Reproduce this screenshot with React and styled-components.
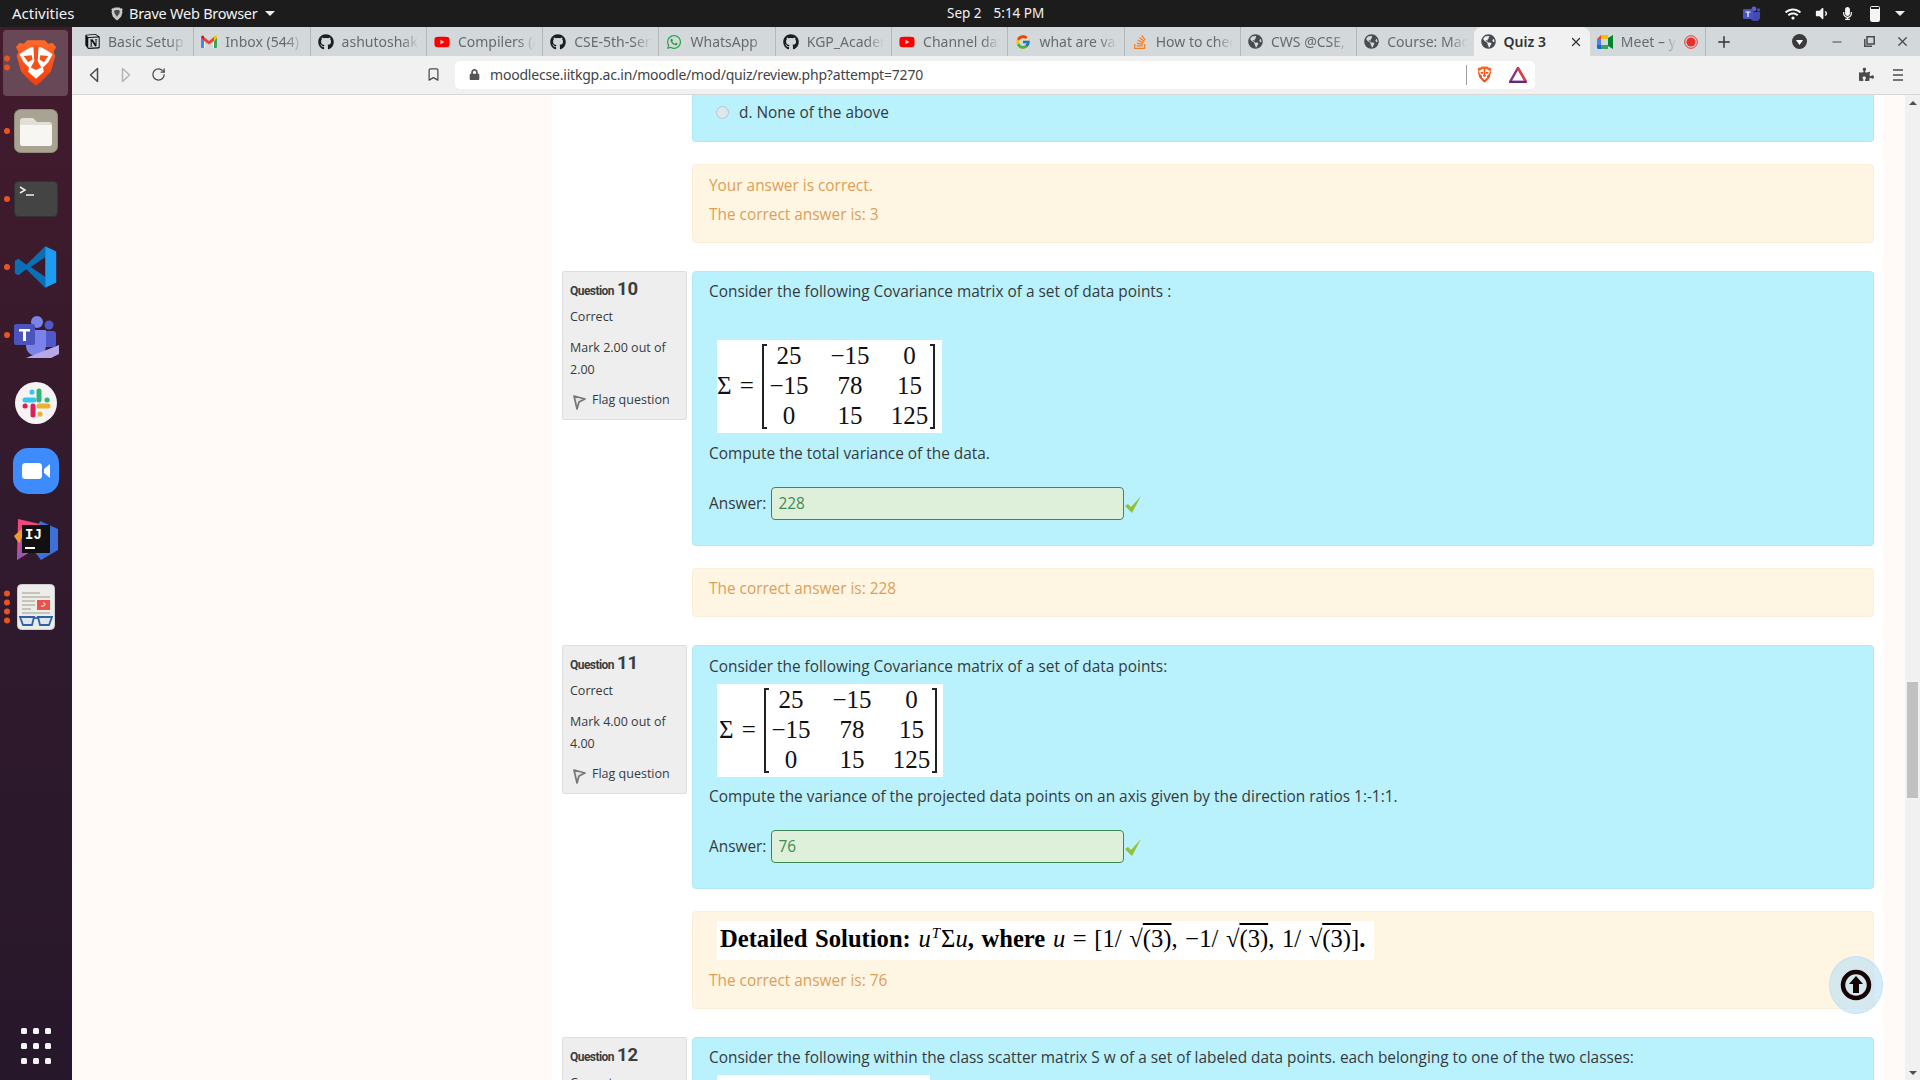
import React from "react";
import styled, { createGlobalStyle } from "styled-components";
import { FaGithub, FaWhatsapp, FaStackOverflow, FaGlobeAmericas, FaLock, FaPuzzlePiece, FaWifi, FaVolumeDown, FaMicrophone, FaYoutube } from "react-icons/fa";
import { FcGoogle } from "react-icons/fc";
import { SiNotion } from "react-icons/si";
import { RotateCw, Bookmark, Plus, X, Minus } from "lucide-react";

const Global = createGlobalStyle`
  html, body { margin: 0; padding: 0; height: 100%; overflow: hidden; background: #fff; }
  * { box-sizing: border-box; }
`;

const UI = `"Noto Sans", "Open Sans", sans-serif`;
const BODY = `"Open Sans", "Noto Sans", sans-serif`;
const SERIF = `"Liberation Serif", serif`;

const Root = styled.div`
  width: 1920px; height: 1080px; display: flex; flex-direction: column; overflow: hidden;
  font-family: ${BODY}; color: #373a3c;
`;
const TopBar = styled.header`
  height: 27px; flex: none; background: #1c1c1c; color: #f2f2f2; display: flex; align-items: center;
  font: 14.5px/27px ${UI}; padding-left: 12px; padding-right: 15px;
`;
const Activities = styled.span` width: 99px; font-size: 15px; `;
const AppMenu = styled.div`
  display: flex; align-items: center; gap: 6px; width: 836px; letter-spacing: -0.25px;
`;
const Caret = styled.span`
  width: 0; height: 0; border-left: 5px solid transparent; border-right: 5px solid transparent;
  border-top: 5px solid #eee; margin-left: ${p => p.$ml || 0}px;
`;
const Clock = styled.time` display: flex; gap: 12px; font-size: 13.5px; `;
const Tray = styled.div` margin-left: auto; display: flex; align-items: center; gap: 12.5px; color: #f4f4f4; `;
const TrayLead = styled.span` display: flex; margin-right: 12px; `;
const Battery = styled.span`
  width: 10px; height: 16px; border: 1.5px solid #f4f4f4; border-radius: 1.5px; margin: 0 3px;
  background: linear-gradient(#1c1c1c 15%, #f4f4f4 15%);
`;
const Body = styled.div` flex: 1; display: flex; min-height: 0; `;
const Dock = styled.nav`
  width: 72px; flex: none; display: flex; flex-direction: column; align-items: center; padding-top: 2px; padding-bottom: 16px;
  background: linear-gradient(180deg, #441b2c 0%, #321a2d 45%, #27172a 100%);
`;
const DockItem = styled.div`
  position: relative; width: 66px; height: 68px; flex: none; display: flex; align-items: center; justify-content: center;
`;
const ActiveBox = styled(DockItem)`
  &::before { content: ""; position: absolute; left: 0; right: 1px; top: 1px; bottom: 1px; background: rgba(255,255,255,.2); border-radius: 4px; }
  & > svg { position: relative; }
`;
const Dots = styled.div`
  position: absolute; left: 1px; top: 50%; transform: translateY(-50%); display: flex; flex-direction: column; gap: 3px;
  & > i { width: 6px; height: 6px; border-radius: 50%; background: #e95420; display: block; }
`;
const AppsGrid = styled.div`
  margin-top: auto; display: grid; grid-template-columns: repeat(3, 6px); gap: 9px 6px; width: 30px;
  & > i { width: 6px; height: 6px; border-radius: 1.5px; background: #f4f4f4; display: block; }
`;
const Browser = styled.div` flex: 1; display: flex; flex-direction: column; min-width: 0; position: relative; `;
const TabStrip = styled.div`
  height: 29px; flex: none; background: #d3d8db; display: flex; align-items: stretch; padding-left: 6px;
`;
const Tab = styled.div`
  width: 116.3px; flex: none; display: flex; align-items: center; gap: 8px; padding: 0 7px;
  font: ${p => (p.$active ? 600 : 400)} 14px/29px ${UI}; color: ${p => (p.$active ? "#2f3336" : "#676b6f")};
  border-right: ${p => (p.$active || p.$noSep ? "none" : "1px solid #b3b8bb")};
  background: ${p => (p.$active ? "#f1f1f1" : "transparent")};
  border-radius: ${p => (p.$active ? "8px 8px 0 0" : 0)};
  & > svg { flex: none; }
`;
const TabLabel = styled.span`
  flex: 1; min-width: 0; overflow: hidden; white-space: nowrap;
  mask-image: ${p => (p.$fade ? "linear-gradient(to right, #000 78%, transparent)" : "none")};
`;
const NewTab = styled.div` width: 36px; display: flex; align-items: center; justify-content: center; color: #333; `;
const WindowControls = styled.div`
  margin-left: auto; display: flex; align-items: center; gap: 20px; padding-right: 10px; color: #4a4a4a;
  & > svg:first-child { margin-right: 3px; }
`;
const Toolbar = styled.div`
  height: 39px; flex: none; background: #f1f1f1; border-bottom: 1px solid #d6d6d6; display: flex; align-items: center; padding: 0 6px 1px 6px;
`;
const NavGroup = styled.div` display: flex; margin-right: 243px; `;
const IconButton = styled.div`
  width: 32px; height: 28px; display: flex; align-items: center; justify-content: center; color: #4b4b4b; flex: none;
`;
const Spacer = styled.div` flex: 1; `;
const Omnibox = styled.div`
  width: 1080px; height: 28px; background: #fff; border-radius: 5px; margin-left: 6px; display: flex; align-items: center;
  padding-left: 14px; font: 14px/28px ${UI}; color: #3f4448; letter-spacing: -0.2px;
`;
const Url = styled.span` margin-left: 10px; `;
const OmniDivider = styled.span` margin-left: auto; width: 1px; height: 20px; background: #9d9d9d; `;
const OmniIcons = styled.div` display: flex; align-items: center; gap: 17px; margin: 0 8px 0 10px; `;

const Page = styled.main`
  flex: 1; min-height: 0; display: flex; overflow: hidden; position: relative; background: #fff9f8;
`;
const LeftGutter = styled.div` width: 480px; flex: none; `;
const Column = styled.div`
  width: 1331px; flex: none; background: #fff; padding: 0 9px 0 10px; display: flex; flex-direction: column; gap: 28px;
`;
const RightGutter = styled.div` width: 22px; flex: none; `;
const Scrollbar = styled.div`
  width: 15px; flex: none; background: #f1f1f1; display: flex; flex-direction: column; align-items: center; padding-top: 6px;
`;
const ScrollArrow = styled.span`
  width: 0; height: 0; border-left: 4px solid transparent; border-right: 4px solid transparent;
  ${p => (p.$down ? "border-top: 4px solid #505050; margin-top: auto; margin-bottom: 5px;" : "border-bottom: 4px solid #505050;")}
`;
const ScrollThumb = styled.span` width: 11px; height: 116px; background: #c1c1c1; margin-top: 577px; `;
const Question = styled.section` display: grid; grid-template-columns: 125px 1182px; column-gap: 5px; align-items: start; `;
const Info = styled.aside`
  background: #eee; border: 1px solid #dedede; border-radius: 2px; height: ${p => p.$h || 149}px; padding: 2px 7px; font-size: 12.5px; line-height: 22px; overflow: hidden;
`;
const QNo = styled.h3`
  margin: 0; font: 700 12px/30px Roboto, sans-serif; color: #3b3e40; letter-spacing: -0.55px;
  & > b { font-size: 18.5px; margin-left: 3px; font-weight: 700; letter-spacing: 0; }
`;
const State = styled.div` margin: 0 0 9px; `;
const Mark = styled.div` margin-bottom: 8px; `;
const Flag = styled.div` display: flex; align-items: flex-start; gap: 6px; padding-left: 3px; & > svg { margin-top: 6px; } `;
const Main = styled.div` display: flex; flex-direction: column; gap: ${p => p.$gap}px; `;
const Formulation = styled.div`
  background: #b9f2fc; border: 1px solid #b0e9f4; border-radius: 4px; padding: ${p => p.$pt ?? 5}px 16px 0; height: ${p => p.$h}px; overflow: hidden;
  font-size: 15.4px; line-height: 29px;
  ${p => p.$cut && "border-top: none; border-top-left-radius: 0; border-top-right-radius: 0;"}
`;
const Para = styled.p` margin: ${p => p.$mt || 0}px 0 0; `;
const OptionRow = styled.label` display: flex; align-items: center; gap: 10px; padding-left: 7px; `;
const Radio = styled.span`
  width: 13px; height: 13px; border-radius: 50%; background: #dfe6ec; border: 1px solid #b9c6d0; flex: none;
`;
const Feedback = styled.div`
  background: #fef5e2; border: 1px solid #fcefd9; border-radius: 4px; padding: ${p => p.$pt ?? 5}px 13px 0 16px; height: ${p => p.$h}px;
  color: #dd9f58; font-size: 15.4px; line-height: 29px; overflow: hidden;
`;
const MatrixBox = styled.div`
  margin: ${p => p.$mt}px 0 0 8px; width: ${p => p.$w || 225}px; height: ${p => p.$boxH || 93}px; background: #fff; display: flex; align-items: center;
  font: 25px/30px ${SERIF}; color: #111; overflow: hidden; flex: none; padding: 0 0 1px ${p => p.$shift || 0}px;
`;
const Sigma = styled.span` width: 45px; flex: none; white-space: nowrap; word-spacing: 2px; `;
const Bracket = styled.span`
  width: 5px; height: 85px; flex: none; border: 2px solid #222; ${p => (p.$right ? "border-left: none;" : "border-right: none;")}
`;
const MatrixGrid = styled.div` display: grid; grid-template-columns: 44px 78px 41px; text-align: center; flex: none; `;
const AnswerRow = styled.div` margin-top: ${p => p.$mt}px; display: flex; align-items: center; gap: 5px; `;
const AnswerField = styled.output`
  width: 353px; height: 33px; background: #deefda; border: 1px solid #3c8a53; border-radius: 4px; padding: 0 6px; color: #3f8b52; line-height: 31px; margin-right: -4px;
`;
const CheckMark = styled.span` display: flex; margin-top: 3px; `;
const SolutionBox = styled.div`
  margin: 0 0 0 8px; width: 657px; height: 39px; background: #fff; color: #000; font: 24.6px/36px ${SERIF}; word-spacing: 1.5px; white-space: nowrap; padding-left: 3px; overflow: hidden;
  & sup { font-size: 15px; line-height: 0; margin: 0 1px; }
`;
const Root3 = styled.span` text-decoration: overline; `;
const ToTop = styled.button`
  position: absolute; left: 1757px; top: 861px; width: 54px; height: 58px; border-radius: 50%; border: 1px solid #c6e3f4; background: rgba(186,224,245,.62);
  display: flex; align-items: center; justify-content: center; padding: 0;
`;

const Brave = ({ s = 44, h }) => (
  <svg width={s} height={h || s * 1.16} viewBox="0 0 48 56">
    <defs><linearGradient id="bg" x1="0" y1="0" x2="0" y2="1"><stop offset="0" stopColor="#ff6a2a" /><stop offset="1" stopColor="#f23d0c" /></linearGradient></defs>
    <path d="M14 2H34L38 6 43 5 47 10 44 15 46 20 41 38 30 49 24 54 18 49 7 38 2 20 4 15 1 10 5 5 10 6Z" fill="url(#bg)" />
    <path d="M11 14L18 10H30L37 14 43 18 38 27 32 33 33 38 24 46 15 38 16 33 10 27 5 18Z" fill="#fff" />
    <path d="M10 20L19 19 20 24 15 27ZM38 20L29 19 28 24 33 27ZM21 8H27L26 26 30 33 24 36 18 33 22 26Z" fill="#f4511e" />
  </svg>
);
const Files = () => (
  <svg width="44" height="44" viewBox="0 0 44 44">
    <rect x=".5" y=".5" width="43" height="43" rx="6" fill="#a8a392" stroke="#8f8a7a" />
    <path d="M6 12a3 3 0 0 1 3-3h10l4 4h12a3 3 0 0 1 3 3v18a3 3 0 0 1-3 3H9a3 3 0 0 1-3-3Z" fill="#e3dfd5" />
    <path d="M6 16h32v18a3 3 0 0 1-3 3H9a3 3 0 0 1-3-3Z" fill="#f7f6f3" />
  </svg>
);
const Terminal = () => (
  <svg width="44" height="36" viewBox="0 0 44 36">
    <rect x=".5" y=".5" width="43" height="35" rx="4" fill="#444" stroke="#333" />
    <path d="M6 6l5 3-5 3M12 14h8" fill="none" stroke="#eee" strokeWidth="1.5" />
  </svg>
);
const VSCode = () => (
  <svg width="44" height="44" viewBox="0 0 100 100">
    <path d="M71 3L28 45 10 31 2 36V64L10 69 28 55 71 97V72L38 50 71 28Z" fill="#0a6fb5" />
    <path d="M71 3L96 15V85L71 97Z" fill="#1f9cf0" />
  </svg>
);
const Teams = () => (
  <svg width="46" height="46" viewBox="0 -3 46 46">
    <circle cx="24" cy="7" r="6" fill="#7b83eb" />
    <circle cx="36" cy="10" r="4.5" fill="#5059c9" />
    <rect x="29" y="16" width="14" height="16" rx="3" fill="#5059c9" />
    <path d="M13 15H33V31a9 9 0 0 1-20 0Z" fill="#7b83eb" />
    <rect x="1" y="9" width="21" height="21" rx="2" fill="#4b53bc" />
    <path d="M6 14H17V16.5H13V26H10V16.5H6Z" fill="#fff" />
    <path d="M13 43L46 30V39L38 43Z" fill="#b7a9e8" />
  </svg>
);
const Slack = () => (
  <svg width="42" height="42" viewBox="0 0 42 42">
    <circle cx="21" cy="21" r="21" fill="#f5f3f3" />
    <g strokeWidth="5" strokeLinecap="round" fill="none">
      <path d="M10 18H19M17 10V10.2" stroke="#36c5f0" />
      <path d="M24 9V18M32 18H32.2" stroke="#2eb67d" />
      <path d="M24 24H33M25 32V32.2" stroke="#ecb22e" />
      <path d="M18 24V33M10 24H10.2" stroke="#e01e5a" />
    </g>
  </svg>
);
const Zoom = () => (
  <svg width="46" height="46" viewBox="0 0 46 46">
    <rect width="46" height="46" rx="15" fill="#3d8bfd" />
    <rect x="9" y="15" width="20" height="16" rx="3.5" fill="#fff" />
    <path d="M31 21L37 16V30L31 25Z" fill="#fff" />
  </svg>
);
const IntelliJ = () => (
  <svg width="46" height="46" viewBox="0 0 46 46">
    <path d="M27 5L45 13V34L28 44 17 30Z" fill="#3f6fd8" />
    <path d="M5 3L27 8 17 36 4 44Z" fill="#f0487c" />
    <path d="M1 20L12 10 16 30 5 26Z" fill="#f09a32" />
    <path d="M4 44L8 22 20 32Z" fill="#8c5bb5" />
    <rect x="9" y="9" width="28" height="28" fill="#111" />
    <text x="12" y="23" fill="#fff" fontFamily="Liberation Mono, monospace" fontWeight="700" fontSize="14">IJ</text>
    <rect x="12" y="31" width="10" height="2" fill="#fff" />
  </svg>
);
const Reader = () => (
  <svg width="38" height="46" viewBox="0 0 38 46">
    <rect x=".5" y=".5" width="37" height="45" rx="4" fill="#ececea" stroke="#cfcfcf" />
    <g stroke="#b9b5a6" strokeWidth="1.6"><path d="M5 9H23M5 13H33M5 17H18M5 21H18M5 25H14M5 29H33" /></g>
    <rect x="20" y="16" width="13" height="10" fill="#e9534b" />
    <path d="M24 22c4 1 6-3 2-3" stroke="#fff" fill="none" />
    <g fill="#dfe6ee" stroke="#2c62a8" strokeWidth="1.8"><path d="M3 33H17L15 41H6Z" /><path d="M21 33H35L32 41H23Z" /><path d="M17 34H21" /></g>
  </svg>
);

const GlobeIcon = () => <FaGlobeAmericas size={15} color="#484c50" />;
const Gmail = () => (
  <svg width="16" height="13" viewBox="0 0 16 13">
    <path d="M1 13V2L8 7 15 2V13H12V6L8 9 4 6V13Z" fill="#fff" />
    <path d="M0 2.5V12a1 1 0 0 0 1 1H3V6Z" fill="#4285f4" />
    <path d="M16 2.5V12a1 1 0 0 1-1 1H13V6Z" fill="#34a853" />
    <path d="M3 2L8 6 13 2V6L8 9.5 3 6Z" fill="#ea4335" />
    <path d="M0 2.5C0 .6 2 -.3 3 1V6Z" fill="#c5221f" />
    <path d="M16 2.5C16 .6 14 -.3 13 1V6Z" fill="#fbbc04" />
  </svg>
);
const Meet = () => (
  <svg width="16" height="14" viewBox="0 0 16 14">
    <path d="M4 0H11V4H4Z" fill="#fbbc04" />
    <path d="M0 4L4 0V4Z" fill="#ea4335" />
    <path d="M0 4H4V10H0Z" fill="#4285f4" />
    <path d="M0 10H4V14H1.5A1.5 1.5 0 0 1 0 12.5Z" fill="#1967d2" />
    <path d="M4 10H11V14H4Z" fill="#34a853" />
    <path d="M11 3L16 0V14L11 11Z" fill="#00832d" />
  </svg>
);
const Rec = () => (
  <svg width="14" height="14" viewBox="0 0 14 14"><circle cx="7" cy="7" r="6.3" fill="none" stroke="#e8302a" /><circle cx="7" cy="7" r="4.6" fill="#e8302a" /></svg>
);
const BraveSmall = () => <Brave s={15} h={17} />;
const Bat = () => (
  <svg width="18" height="16" viewBox="0 0 18 16">
    <path d="M9 1L17 15H1Z" fill="none" stroke="#8b2f87" strokeWidth="2.4" />
    <path d="M9 1L17 15" stroke="#e0443a" strokeWidth="2.4" />
    <path d="M1 15H17" stroke="#5b2a86" strokeWidth="2.4" />
  </svg>
);
const Back = () => (
  <svg width="10" height="16" viewBox="0 0 10 16"><path d="M8.5 1.5V14.5L1.5 8Z" fill="none" stroke="#4b4b4b" strokeWidth="1.5" strokeLinejoin="round" /></svg>
);
const Forward = () => (
  <svg width="10" height="16" viewBox="0 0 10 16"><path d="M1.5 1.5V14.5L8.5 8Z" fill="none" stroke="#b5b5b5" strokeWidth="1.5" strokeLinejoin="round" /></svg>
);
const BraveTray = () => (
  <svg width="12" height="14" viewBox="0 0 48 56"><path d="M14 2H34L38 6 43 5 47 10 44 15 46 20 41 38 30 49 24 54 18 49 7 38 2 20 4 15 1 10 5 5 10 6Z" fill="#c9c9c9" /><path d="M12 16L18 12H30L36 16 33 27 28 33 24 40 20 33 15 27Z" fill="#4a4a4a" /></svg>
);
const TeamsTray = () => (
  <svg width="18" height="16" viewBox="0 0 18 16">
    <circle cx="11" cy="3" r="2.4" fill="#5b63c9" /><circle cx="15.5" cy="4" r="1.8" fill="#444bb0" />
    <path d="M8 6H17V11a4 4 0 0 1-4 4H11a3 3 0 0 1-3-3Z" fill="#444bb0" />
    <rect y="3" width="10" height="10" rx="1" fill="#4b53bc" />
    <path d="M2.5 5.5H7.5V6.6H5.6V11H4.4V6.6H2.5Z" fill="#fff" />
  </svg>
);
const FlagIcon = () => (
  <svg width="13" height="15" viewBox="0 0 13 15"><path d="M1 1L12 4 6 7 4 14Z" fill="#e4e4e4" stroke="#777" strokeWidth="1.7" strokeLinejoin="round" /></svg>
);
const Check = () => (
  <CheckMark><svg width="17" height="18" viewBox="0 0 17 18"><path d="M0 10L3 8 6 11 16 0 7 17Z" fill="#94c133" /></svg></CheckMark>
);
const UpCircle = () => (
  <svg width="32" height="32" viewBox="0 0 32 32">
    <circle cx="16" cy="16" r="13" fill="none" stroke="#170505" strokeWidth="4.5" />
    <path d="M16 7L23 15H19V24H13V15H9Z" fill="#170505" />
  </svg>
);
const MenuLines = () => (
  <svg width="14" height="14" viewBox="0 0 14 14"><path d="M2 2H12M2 7H12M2 12H12" stroke="#4b4b4b" strokeWidth="1.6" /></svg>
);
const Restore = () => (
  <svg width="11" height="11" viewBox="0 0 11 11"><path d="M3 .8H10.2V8H3ZM.8 3V10.2H8" fill="none" stroke="#4a4a4a" strokeWidth="1.5" /></svg>
);
const DropDisc = () => (
  <svg width="15" height="15" viewBox="0 0 15 15"><circle cx="7.5" cy="7.5" r="7.5" fill="#3b3b3b" /><path d="M4 6H11L7.5 11Z" fill="#fff" /></svg>
);

const TABS = [
  { icon: <SiNotion size={15} color="#111" />, label: "Basic Setup" },
  { icon: <Gmail />, label: "Inbox (544)" },
  { icon: <FaGithub size={16} color="#1b1f23" />, label: "ashutoshak" },
  { icon: <FaYoutube size={16} color="#f00" />, label: "Compilers (A" },
  { icon: <FaGithub size={16} color="#1b1f23" />, label: "CSE-5th-Sem" },
  { icon: <FaWhatsapp size={16} color="#25a244" />, label: "WhatsApp" },
  { icon: <FaGithub size={16} color="#1b1f23" />, label: "KGP_Academ" },
  { icon: <FaYoutube size={16} color="#f00" />, label: "Channel dash" },
  { icon: <FcGoogle size={16} />, label: "what are vari" },
  { icon: <FaStackOverflow size={16} color="#f48024" />, label: "How to chec" },
  { icon: <GlobeIcon />, label: "CWS @CSE," },
  { icon: <GlobeIcon />, label: "Course: Mac" },
];

const DOCK = [
  { icon: <Files />, dots: 1 },
  { icon: <Terminal />, dots: 1 },
  { icon: <VSCode />, dots: 1 },
  { icon: <Teams />, dots: 1 },
  { icon: <Slack />, dots: 0 },
  { icon: <Zoom />, dots: 0 },
  { icon: <IntelliJ />, dots: 0 },
  { icon: <Reader />, dots: 4 },
];

const DotList = ({ n }) => (
  <Dots>{Array.from({ length: n }, (_, i) => <i key={i} />)}</Dots>
);

const Matrix = ({ mt, w, clip, shift }) => (
  <MatrixBox $mt={mt} $w={w} $shift={shift}>
    {!clip && (
      <>
        <Sigma>Σ =</Sigma>
        <Bracket />
        <MatrixGrid>
          <span>25</span><span>−15</span><span>0</span>
          <span>−15</span><span>78</span><span>15</span>
          <span>0</span><span>15</span><span>125</span>
        </MatrixGrid>
        <Bracket $right />
      </>
    )}
  </MatrixBox>
);

const QuestionInfo = ({ no, mark }) => (
  <Info>
    <QNo>Question<b>{no}</b></QNo>
    <State>Correct</State>
    <Mark>Mark {mark} out of<br />{mark}</Mark>
    <Flag><FlagIcon /><span>Flag question</span></Flag>
  </Info>
);

export default function App() {
  return (
    <Root>
      <Global />
      <TopBar>
        <Activities>Activities</Activities>
        <AppMenu><BraveTray />Brave Web Browser<Caret $ml={1} /></AppMenu>
        <Clock><span>Sep 2</span><span>5:14 PM</span></Clock>
        <Tray>
          <TrayLead><TeamsTray /></TrayLead>
          <FaWifi size={16} />
          <FaVolumeDown size={15} />
          <FaMicrophone size={13} />
          <Battery />
          <Caret />
        </Tray>
      </TopBar>
      <Body>
        <Dock>
          <ActiveBox>
            <DotList n={2} />
            <Brave s={42} h={50} />
          </ActiveBox>
          {DOCK.map((d, i) => (
            <DockItem key={i}>
              {d.dots > 0 && <DotList n={d.dots} />}
              {d.icon}
            </DockItem>
          ))}
          <AppsGrid>{Array.from({ length: 9 }, (_, i) => <i key={i} />)}</AppsGrid>
        </Dock>
        <Browser>
          <TabStrip>
            {TABS.map((t, i) => (
              <Tab key={i} $noSep={i === 11}>{t.icon}<TabLabel $fade>{t.label}</TabLabel></Tab>
            ))}
            <Tab $active><GlobeIcon /><TabLabel>Quiz 3</TabLabel><X size={14} strokeWidth={2.2} /></Tab>
            <Tab><Meet /><TabLabel $fade>Meet – yo</TabLabel><Rec /></Tab>
            <NewTab><Plus size={18} strokeWidth={2} /></NewTab>
            <WindowControls>
              <DropDisc />
              <Minus size={14} strokeWidth={2} />
              <Restore />
              <X size={15} strokeWidth={2} />
            </WindowControls>
          </TabStrip>
          <Toolbar>
            <NavGroup>
              <IconButton><Back /></IconButton>
              <IconButton><Forward /></IconButton>
              <IconButton><RotateCw size={15} strokeWidth={2} /></IconButton>
            </NavGroup>
            <IconButton><Bookmark size={15} strokeWidth={2} /></IconButton>
            <Omnibox>
              <FaLock size={11} color="#555" />
              <Url>moodlecse.iitkgp.ac.in/moodle/mod/quiz/review.php?attempt=7270</Url>
              <OmniDivider />
              <OmniIcons><BraveSmall /><Bat /></OmniIcons>
            </Omnibox>
            <Spacer />
            <IconButton><FaPuzzlePiece size={15} /></IconButton>
            <IconButton><MenuLines /></IconButton>
          </Toolbar>
          <Page>
            <LeftGutter />
            <Column>
              <Question>
                <span />
                <Main $gap={22}>
                  <Formulation $h={47} $cut $pt={3}>
                    <OptionRow><Radio />d. None of the above</OptionRow>
                  </Formulation>
                  <Feedback $h={79} $pt={6}>
                    <div>Your answer is correct.</div>
                    <div>The correct answer is: 3</div>
                  </Feedback>
                </Main>
              </Question>
              <Question>
                <QuestionInfo no="10" mark="2.00" />
                <Main $gap={22}>
                  <Formulation $h={275}>
                    <Para>Consider the following Covariance matrix of a set of data points :</Para>
                    <Matrix mt={34} />
                    <Para $mt={6}>Compute the total variance of the data.</Para>
                    <AnswerRow $mt={19}>
                      Answer: <AnswerField>228</AnswerField><Check />
                    </AnswerRow>
                  </Formulation>
                  <Feedback $h={49} $pt={5}>The correct answer is: 228</Feedback>
                </Main>
              </Question>
              <Question>
                <QuestionInfo no="11" mark="4.00" />
                <Main $gap={22}>
                  <Formulation $h={244} $pt={6}>
                    <Para>Consider the following Covariance matrix of a set of data points:</Para>
                    <Matrix mt={3} w={226} shift={2} />
                    <Para $mt={5}>Compute the variance of the projected data points on an axis given by the direction ratios 1:-1:1.</Para>
                    <AnswerRow $mt={19}>
                      Answer: <AnswerField>76</AnswerField><Check />
                    </AnswerRow>
                  </Formulation>
                  <Feedback $h={98} $pt={9}>
                    <SolutionBox>
                      <b>Detailed Solution:</b> <i>u</i><sup><i>T</i></sup>Σ<i>u</i><b>,</b> <b>where</b> <i>u</i> = [1/ √<Root3>(3)</Root3>, −1/ √<Root3>(3)</Root3>, 1/ √<Root3>(3)</Root3>]<b>.</b>
                    </SolutionBox>
                    <Para $mt={6}>The correct answer is: 76</Para>
                  </Feedback>
                </Main>
              </Question>
              <Question>
                <QuestionInfo no="12" mark="4.00" />
                <Main $gap={22}>
                  <Formulation $h={300} $pt={5}>
                    <Para>Consider the following within the class scatter matrix S w of a set of labeled data points. each belonging to one of the two classes:</Para>
                    <Matrix mt={3} w={213} clip />
                  </Formulation>
                </Main>
              </Question>
            </Column>
            <RightGutter />
            <Scrollbar>
              <ScrollArrow />
              <ScrollThumb />
              <ScrollArrow $down />
            </Scrollbar>
            <ToTop aria-label="Back to top"><UpCircle /></ToTop>
          </Page>
        </Browser>
      </Body>
    </Root>
  );
}
